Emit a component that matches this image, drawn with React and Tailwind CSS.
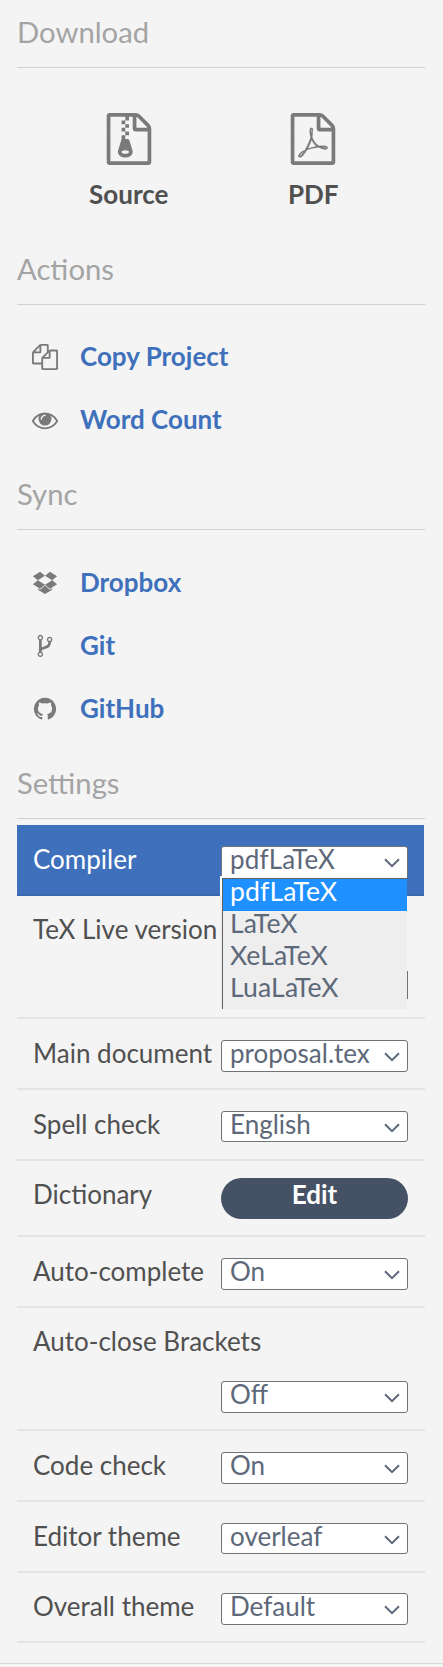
const ICONS = {
  archive:
    "M768 384v-128h-128v128h128zm128 128v-128h-128v128h128zm-128 128v-128h-128v128h128zm128 128v-128h-128v128h128zm700-388q28 28 48 76t20 88v1152q0 40-28 68t-68 28h-1344q-40 0-68-28t-28-68v-1600q0-40 28-68t68-28h896q40 0 88 20t76 48zm-444-244v376h376q-10-29-22-41l-313-313q-12-12-41-22zm384 1528v-1024h-416q-40 0-68-28t-28-68v-416h-128v128h-128v-128h-512v1536h1280zm-627-721l107 349q8 27 8 52 0 83-72.5 137.5t-183.5 54.5-183.5-54.5-72.5-137.5q0-25 8-52 21-63 120-396v-128h128v128h79q22 0 39 13t23 34zm-141 465q53 0 90.5-19t37.5-45-37.5-45-90.5-19-90.5 19-37.5 45 37.5 45 90.5 19z",
  pdf: "M1596 380q28 28 48 76t20 88v1152q0 40-28 68t-68 28h-1344q-40 0-68-28t-28-68v-1600q0-40 28-68t68-28h896q40 0 88 20t76 48zm-444-244v376h376q-10-29-22-41l-313-313q-12-12-41-22zm384 1528v-1024h-416q-40 0-68-28t-28-68v-416h-768v1536h1280zm-514-593q33 26 84 56 59-7 117-7 147 0 177 49 16 22 2 52 0 1-1 2l-2 2v1q-6 38-71 38-48 0-115-20t-130-53q-221 24-392 83-153 262-242 262-15 0-28-7l-24-12q-1-1-6-5-10-10-6-36 9-40 56-91.5t132-96.5q14-9 23 6 2 2 2 4 52-85 107-197 68-136 104-262-24-82-30.5-159.5t6.5-127.5q11-40 42-40h22q23 0 35 15 18 21 9 68-2 6-4 8 1 3 1 8v30q-2 123-14 192 55 164 146 238zm-576 411q52-24 137-158-51 40-87.5 84t-49.5 74zm398-920q-15 42-2 132 1-7 7-44 0-3 7-43 1-4 4-8-1-1-1-2-1-2-1-3-1-22-13-36 0 1-1 2v2zm-124 661q135-54 284-81-2-1-13-9.5t-16-13.5q-76-67-127-176-27 86-83 197-30 56-45 83zm646-16q-24-24-140-24 76 28 124 28 14 0 18-1 0-1-2-3z",
  copy: "M1696 384q40 0 68 28t28 68v1216q0 40-28 68t-68 28h-960q-40 0-68-28t-28-68v-288h-544q-40 0-68-28t-28-68v-672q0-40 20-88t48-76l408-408q28-28 76-48t88-20h416q40 0 68 28t28 68v328q68-40 128-40h416zm-544 213l-299 299h299v-299zm-640-384l-299 299h299v-299zm196 647l316-316v-416h-384v416q0 40-28 68t-68 28h-416v640h512v-256q0-40 20-88t48-76zm956 804v-1152h-384v416q0 40-28 68t-68 28h-416v640h896z",
  eye: "M1664 960q-152-236-381-353 61 104 61 225 0 185-131.5 316.5t-316.5 131.5-316.5-131.5-131.5-316.5q0-121 61-225-229 117-381 353 133 205 333.5 326.5t434.5 121.5 434.5-121.5 333.5-326.5zm-720-384q0-20-14-34t-34-14q-125 0-214.5 89.5t-89.5 214.5q0 20 14 34t34 14 34-14 14-34q0-86 61-147t147-61q20 0 34-14t14-34zm848 384q0 34-20 69-140 230-376.5 368.5t-499.5 138.5-499.5-139-376.5-368q-20-35-20-69t20-69q140-229 376.5-368t499.5-139 499.5 139 376.5 368q20 35 20 69z",
  dropbox:
    "M402 709l494 305-342 285-490-319zM1388 1259v108l-492 294-489-294v-108l147 96 342-286 345 286zM554 119l342 285-494 305-338-271zM1390 709l338 271-490 319-342-285zM1238 119l490 319-338 271-494-305z",
  fork: "M672 1472q0-40-28-68t-68-28-68 28-28 68 28 68 68 28 68-28 28-68zm0-1152q0-40-28-68t-68-28-68 28-28 68 28 68 68 28 68-28 28-68zm640 128q0-40-28-68t-68-28-68 28-28 68 28 68 68 28 68-28 28-68zm96 0q0 52-26 96.5t-70 69.5q-2 287-226 414-67 38-203 81-128 40-169.5 71t-41.5 100v26q44 25 70 69.5t26 96.5q0 80-56 136t-136 56-136-56-56-136q0-52 26-96.5t70-69.5v-820q-44-25-70-69.5t-26-96.5q0-80 56-136t136-56 136 56 56 136q0 52-26 96.5t-70 69.5v497q54-26 154-57 55-17 87.5-29.5t70.5-31 59-39.5 40.5-51 28-69.5 8.5-91.5q-44-25-70-69.5t-26-96.5q0-80 56-136t136-56 136 56 56 136z",
  github:
    "M896 128q209 0 385.5 103t279.5 279.5 103 385.5q0 251-146.5 451.5t-378.5 277.5q-27 5-40-7t-13-30q0-3 .5-76.5t.5-134.5q0-97-52-142 57-6 102.5-18t94-39 81-66.5 53-105 20.5-150.5q0-119-79-206 37-91-8-204-28-9-81 11t-92 44l-38 24q-93-26-192-26t-192 26q-16-11-42.5-27t-83.5-38.5-85-13.5q-45 113-8 204-79 87-79 206 0 85 20.5 150t52.5 105 80.5 67 94 39 102.5 18q-39 36-49 103-21 10-45 15t-57 5-65.5-21.5-55.5-62.5q-19-32-48.5-52t-49.5-24l-20-3q-21 0-29 4.5t-5 11.5 9 14 13 12l7 5q22 10 43.5 38t31.5 51l10 23q13 38 44 61.5t67 30 69.5 7 55.5-3.5l23-4q0 38 .5 88.5t.5 54.5q0 18-13 30t-40 7q-232-77-378.5-277.5t-146.5-451.5q0-209 103-385.5t279.5-279.5 385.5-103z",
};

function Icon({ name, className }) {
  return (
    <svg viewBox="0 0 1792 1792" fill="#7a7a7a" className={className}>
      <path d={ICONS[name]} />
    </svg>
  );
}

function Heading({ children }) {
  return (
    <h4 className="h-[53px] border-b border-[#cfcfcf] text-[29.25px] leading-[33px] text-[#a4a4a4]">
      {children}
    </h4>
  );
}

function Download({ icon, label }) {
  return (
    <a className="flex w-[184.5px] flex-col items-center font-bold text-[#505050]">
      <Icon name={icon} className="size-[52px]" />
      <span className="mt-[13.5px] leading-8">{label}</span>
    </a>
  );
}

function Action({ icon, label }) {
  return (
    <li className="flex h-[63px] items-start pl-[15px]">
      <Icon name={icon} className="mt-5 size-[26px]" />
      <a className="mt-4 ml-[22px] leading-8 font-bold text-[#3e70bb]">{label}</a>
    </li>
  );
}

function Chevron() {
  return (
    <svg viewBox="0 0 16 10" fill="none" stroke="#5d6879" strokeWidth="2" className="mt-[11px] h-[10px] w-4">
      <path d="M1 1.2l7 7 7-7" />
    </svg>
  );
}

function Select({ value, className }) {
  return (
    <div
      className={
        "flex w-[187px] shrink-0 justify-between rounded-[3px] border border-[#6f7277] bg-white pr-[7px] pl-2 text-[#5d6879] " +
        className
      }
    >
      <span className="-mt-1 leading-8">{value}</span>
      <Chevron />
    </div>
  );
}

function Row({ label, className, children }) {
  return (
    <div className={"flex items-start justify-between border-b-2 border-[#e4e4e4] pr-[17px] pl-4 " + className}>
      <span className="leading-8 whitespace-nowrap">{label}</span>
      {children}
    </div>
  );
}

const OPTIONS = ["LaTeX", "XeLaTeX", "LuaLaTeX"];

export default function App() {
  return (
    <div className="h-[1667px] w-[443px] bg-[#f4f4f4] font-['Lato',sans-serif] text-[26px] text-[#505050]">
      <div className="flex h-[1664px] flex-col border-b border-[#dadada] pt-[15px] pr-[18px] pl-[17px]">
        <section className="h-[237px]">
          <Heading>Download</Heading>
          <div className="flex justify-center pt-[44.5px]">
            <Download icon="archive" label="Source" />
            <Download icon="pdf" label="PDF" />
          </div>
        </section>
        <section className="h-[225px]">
          <Heading>Actions</Heading>
          <ul className="pt-[19px]">
            <Action icon="copy" label="Copy Project" />
            <Action icon="eye" label="Word Count" />
          </ul>
        </section>
        <section className="h-[289px]">
          <Heading>Sync</Heading>
          <ul className="pt-5">
            <Action icon="dropbox" label="Dropbox" />
            <Action icon="fork" label="Git" />
            <Action icon="github" label="GitHub" />
          </ul>
        </section>
        <section>
          <Heading>Settings</Heading>
          <div className="relative mt-1.5 mr-px flex h-[71px] items-start justify-between border-b-2 border-[#3b69b0] bg-[#3e70bb] pt-[18px] pr-4 pl-4 text-white">
            <span className="leading-8">Compiler</span>
            <Select value="pdfLaTeX" className="mt-[3px] h-[30px] rounded-b-none border-b-0 tracking-[0.2px]" />
            <div className="absolute top-[51px] left-[203px] flex h-[133px] w-[187px] border-t-2 border-white bg-[#eeeeee] text-[26.6px] tracking-[0.15px] text-[#5d6879]">
              <div className="h-[18px] w-0.5 bg-white" />
              <ul className="h-[131px] grow border-t border-l border-[#606060]">
                <li className="h-8 bg-[#1e90ff] pl-[7px] leading-6 text-white">pdfLaTeX</li>
                {OPTIONS.map((name) => (
                  <li key={name} className="h-8 pl-[7px] leading-6">
                    {name}
                  </li>
                ))}
              </ul>
            </div>
          </div>
          <Row label="TeX Live version" className="h-[123px] pt-[17px]">
            <div className="mt-[58px] h-7 w-px bg-[#6f7277]" />
          </Row>
          <Row label="Main document" className="h-[71px] pt-[18px]">
            <Select value="proposal.tex" className="mt-[3px] h-8" />
          </Row>
          <Row label="Spell check" className="h-[71px] pt-[18px]">
            <Select value="English" className="mt-[3px] h-[31px]" />
          </Row>
          <Row label="Dictionary" className="h-[76px] pt-[17px]">
            <button className="flex h-[41px] w-[187px] justify-center rounded-full bg-[#455265] font-bold text-white">
              <span className="leading-8">Edit</span>
            </button>
          </Row>
          <Row label="Auto-complete" className="h-[71px] pt-[18px]">
            <Select value="On" className="mt-[3px] h-8" />
          </Row>
          <Row label="Auto-close Brackets" className="h-[123px] flex-wrap content-start pt-[17px]">
            <div className="mt-[24px] flex w-full justify-end">
              <Select value="Off" className="h-8" />
            </div>
          </Row>
          <Row label="Code check" className="h-[71px] pt-[18px]">
            <Select value="On" className="mt-[3px] h-8" />
          </Row>
          <Row label="Editor theme" className="h-[71px] pt-[18px]">
            <Select value="overleaf" className="mt-[3px] h-[31px]" />
          </Row>
          <Row label="Overall theme" className="h-[70px] pt-[17px]">
            <Select value="Default" className="mt-[3px] h-8" />
          </Row>
        </section>
      </div>
    </div>
  );
}
